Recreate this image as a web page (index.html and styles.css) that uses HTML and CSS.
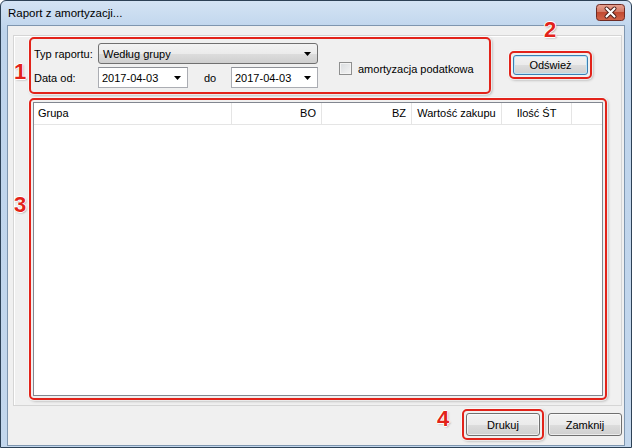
FILE: index.html
```html
<!DOCTYPE html>
<html lang="pl">
<head>
    <meta charset="UTF-8">
    <title>Raport z amortyzacji</title>
    <link rel="stylesheet" href="styles.css">
</head>
<body>
    <div class="window">
        <div class="titlebar">
            <span class="title">Raport z amortyzacji...</span>
            <span class="close">
                <svg width="29" height="17" viewBox="0 0 29 17">
                    <defs>
                        <linearGradient id="cg" x1="0" y1="0" x2="0" y2="1">
                            <stop offset="0" stop-color="#e8a493"/>
                            <stop offset="0.45" stop-color="#d47a66"/>
                            <stop offset="0.5" stop-color="#c24a31"/>
                            <stop offset="1" stop-color="#d2654a"/>
                        </linearGradient>
                    </defs>
                    <rect x="0.5" y="0.5" width="28" height="16" rx="3" fill="url(#cg)" stroke="#6e2b24"/>
                    <path d="M10.5 4.5l8 8M18.5 4.5l-8 8" stroke="#4a1c16" stroke-width="4" stroke-linecap="round"/>
                    <path d="M10.5 4.5l8 8M18.5 4.5l-8 8" stroke="#ffffff" stroke-width="2.2" stroke-linecap="round"/>
                </svg>
            </span>
        </div>
        <div class="client">
            <div class="panel">
                <div class="top-row">
                    <div class="mark filters">
                        <div class="fields">
                            <div class="field-row">
                                <span class="lbl">Typ raportu:</span>
                                <div class="combo">
                                    <span>Według grupy</span>
                                    <svg class="arrow" width="7" height="4" viewBox="0 0 7 4"><path d="M0 0h7L3.5 4z"/></svg>
                                </div>
                            </div>
                            <div class="field-row">
                                <span class="lbl">Data od:</span>
                                <div class="date">
                                    <span>2017-04-03</span>
                                    <svg class="arrow" width="7" height="4" viewBox="0 0 7 4"><path d="M0 0h7L3.5 4z"/></svg>
                                </div>
                                <span class="do">do</span>
                                <div class="date date-to">
                                    <span>2017-04-03</span>
                                    <svg class="arrow" width="7" height="4" viewBox="0 0 7 4"><path d="M0 0h7L3.5 4z"/></svg>
                                </div>
                            </div>
                        </div>
                        <label class="check">
                            <span class="check-box"></span>
                            <span>amortyzacja podatkowa</span>
                        </label>
                    </div>
                    <div class="mark refresh">
                        <button class="btn btn-default">Odśwież</button>
                    </div>
                </div>
                <div class="mark list-wrap">
                    <div class="list">
                        <div class="list-head">
                            <div class="col col-grupa">Grupa</div>
                            <div class="col col-num">BO</div>
                            <div class="col col-num">BZ</div>
                            <div class="col col-mid">Wartość zakupu</div>
                            <div class="col col-ilosc">Ilość ŚT</div>
                            <div class="col col-rest"></div>
                        </div>
                    </div>
                </div>
            </div>
            <div class="footer">
                <div class="mark print">
                    <button class="btn">Drukuj</button>
                </div>
                <button class="btn">Zamknij</button>
            </div>
        </div>

        <span class="num n1">1</span>
        <span class="num n2">2</span>
        <span class="num n3">3</span>
        <span class="num n4">4</span>
    </div>
</body>
</html>
```

FILE: styles.css
```css
*{
    margin: 0;
    padding: 0;
    box-sizing: border-box;
}
body{
    background-color: #ffffff;
    font-family: "Liberation Sans", Arial, sans-serif;
    font-size: 11px;
    color: #000;
}
.window{
    position: relative;
    width: 632px;
    height: 448px;
    border: 1px solid #2d4156;
    border-radius: 6px 6px 0 0;
    background: linear-gradient(to bottom, #d4e3f4 0, #bed4ec 30px, #c3d7ed 100%);
    padding: 0 6px 1px 6px;
    display: flex;
    flex-direction: column;
}
.titlebar{
    height: 24px;
    display: flex;
    justify-content: space-between;
    align-items: center;
}
.title{
    font-size: 11.5px;
    padding-left: 1px;
    color: #000;
}
.close{
    align-self: flex-start;
    margin-top: 3px;
    height: 17px;
}
.close svg{
    display: block;
}

.client{
    flex: 1;
    border: 1px solid #7f96af;
    background: #f0f0f0;
    padding: 9px 2px 0 5px;
    display: flex;
    flex-direction: column;
}
.panel{
    border: 1px solid #d5d5d5;
    box-shadow: inset 1px 1px 0 #ffffff;
    padding: 1px 12px 5px 15px;
}

/* red annotation frames */
.mark{
    border: 2px solid #e2231a;
    border-radius: 5px;
    box-shadow: 0 0 0 1px rgba(255,255,255,0.7), 1px 1px 3px rgba(0,0,0,0.35);
}

.top-row{
    display: flex;
    align-items: flex-start;
}
.filters{
    width: 462px;
    height: 57px;
    padding: 4px 3px 0 3px;
    display: flex;
    align-items: center;
}
.fields{
    display: flex;
    flex-direction: column;
    gap: 3px;
    align-self: flex-start;
}
.field-row{
    display: flex;
    align-items: center;
    height: 21px;
}
.lbl{
    width: 64px;
}
.combo{
    width: 220px;
    height: 21px;
    border: 1px solid #707070;
    border-radius: 3px;
    background: linear-gradient(to bottom, #f3f3f3 0, #ebebeb 50%, #dddddd 51%, #cfcfcf 100%);
    display: flex;
    align-items: center;
    justify-content: space-between;
    padding: 0 6px 0 4px;
}
.date{
    width: 90px;
    height: 21px;
    border: 1px solid #abadb3;
    border-top-color: #8e9197;
    background: #ffffff;
    display: flex;
    align-items: center;
    justify-content: space-between;
    padding: 0 6px 0 3px;
}
.date-to{
    width: 87px;
}
.arrow{
    display: block;
    fill: #000;
}
.do{
    width: 43px;
    padding-left: 16px;
}
.check{
    display: flex;
    align-items: center;
    margin-left: 21px;
    margin-top: 2px;
}
.check-box{
    width: 13px;
    height: 13px;
    border: 1px solid #8e8f8f;
    background: linear-gradient(135deg, #d9dcdf 0, #f4f4f4 100%);
    box-shadow: inset 0 0 0 1px #f4f4f4;
    margin-right: 6px;
}

.refresh{
    margin-left: 18px;
    margin-top: 14px;
    padding: 2px;
}
.btn{
    font-family: "Liberation Sans", Arial, sans-serif;
    font-size: 11px;
    color: #000;
    width: 74px;
    height: 23px;
    border: 1px solid #707070;
    border-radius: 3px;
    background: linear-gradient(to bottom, #f2f2f2 0, #ebebeb 50%, #dddddd 51%, #cfcfcf 100%);
    box-shadow: inset 0 0 0 1px rgba(255,255,255,0.6);
}
.btn-default{
    width: 75px;
    height: 20px;
    border-color: #3c7fb1;
    box-shadow: inset 0 0 0 1px #bfe6f8;
}

.list-wrap{
    margin-top: 4px;
    width: 578px;
    height: 302px;
    padding: 2px;
}
.list{
    height: 100%;
    border: 1px solid #828790;
    background: #ffffff;
}
.list-head{
    display: flex;
    height: 22px;
    border-bottom: 1px solid #e5e5e5;
}
.col{
    height: 21px;
    line-height: 21px;
    border-right: 1px solid #e5e5e5;
    white-space: nowrap;
}
.col-grupa{
    width: 198px;
    padding-left: 4px;
}
.col-num{
    width: 90px;
    text-align: right;
    padding-right: 5px;
}
.col-mid{
    width: 90px;
    text-align: center;
}
.col-ilosc{
    width: 70px;
    text-align: center;
}
.col-rest{
    flex: 1;
    border-right: none;
}

.footer{
    display: flex;
    justify-content: flex-end;
    align-items: center;
    margin-top: 3px;
}
.print{
    padding: 2px;
    margin-right: 4px;
}

/* annotation numbers */
.num{
    position: absolute;
    font-family: "Liberation Sans", Arial, sans-serif;
    font-weight: bold;
    font-size: 22px;
    line-height: 22px;
    color: #e2231a;
    text-shadow: -1px 0 #fff, 1px 0 #fff, 0 -1px #fff, 0 1px #fff, 1px 1px 2px rgba(0,0,0,0.4);
}
.n1{ left: 13px; top: 60px; }
.n2{ left: 543px; top: 18px; }
.n3{ left: 13px; top: 193px; }
.n4{ left: 436px; top: 407px; }
```
